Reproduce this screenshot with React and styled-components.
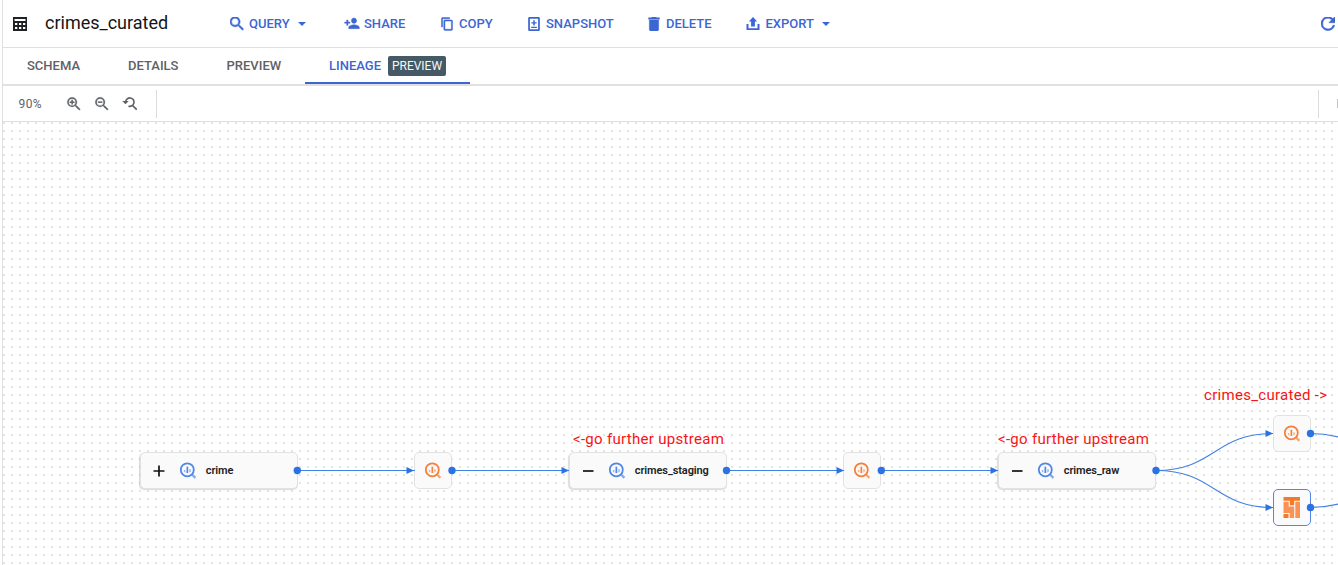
import React from 'react';
import styled, { createGlobalStyle, css } from 'styled-components';

const BLUE = '#3c66d2';
const LINE = '#e0e0e0';

const GlobalStyle = createGlobalStyle`
  * { box-sizing: border-box; }
  body { margin: 0; background: #fff; overflow: hidden; font-family: Roboto, sans-serif; }
`;

const Page = styled.main`
  height: 565px;
  width: 1338px;
  padding-left: 2px;
  overflow: hidden;
`;

const Panel = styled.div`
  height: 100%;
  border-left: 1px solid ${LINE};
  display: flex;
  flex-direction: column;
`;

const Header = styled.header`
  flex: none;
  height: 48px;
  border-bottom: 1px solid ${LINE};
  display: flex;
  align-items: center;
  padding-left: 10px;
  overflow: hidden;
`;

const TitleBlock = styled.div`
  display: flex;
  align-items: center;
  width: 217px;
`;

const Title = styled.h1`
  margin: 0 0 0 18px;
  padding-bottom: 1px;
  font-size: 18px;
  line-height: 24px;
  font-weight: 400;
  color: #151515;
`;

const Icon = styled.svg`
  flex: none;
  display: block;
  width: ${(p) => p.$size}px;
  height: ${(p) => p.$size}px;
  fill: currentColor;
`;

const Action = styled.button`
  flex: none;
  width: ${(p) => p.$width}px;
  height: 32px;
  padding: 0;
  border: 0;
  background: none;
  display: flex;
  align-items: center;
  color: ${BLUE};
  font: 500 13px/20px Roboto, sans-serif;
  white-space: nowrap;
`;

const ActionLabel = styled.span`
  margin-left: ${(p) => p.$gap}px;
`;

const Caret = styled.span`
  margin-left: 8px;
  border: 4px solid transparent;
  border-top-color: ${BLUE};
  border-bottom: 0;
`;

const RefreshButton = styled(Action)`
  margin-left: auto;
`;

const Tabs = styled.nav`
  flex: none;
  height: 38px;
  border-bottom: 2px solid ${LINE};
  display: flex;
`;

const Tab = styled.a`
  height: 36px;
  width: ${(p) => p.$width}px;
  padding-left: 24px;
  display: flex;
  align-items: center;
  font-size: 13px;
  font-weight: 500;
  color: #5f6164;
  border-bottom: 2px solid transparent;
  ${(p) => p.$active && css`
    color: ${BLUE};
    border-bottom-color: ${BLUE};
  `}
`;

const Badge = styled.span`
  margin: 2px 0 0 7px;
  width: 58px;
  height: 20px;
  border-radius: 2px;
  background: #455a64;
  color: #f5f7f8;
  font-size: 12px;
  font-weight: 400;
  line-height: 20px;
  text-align: center;
`;

const Toolbar = styled.div`
  flex: none;
  height: 36px;
  border-bottom: 1px solid ${LINE};
  display: flex;
  align-items: center;
  color: #5f6368;
`;

const Zoom = styled.span`
  width: 62px;
  padding-left: 15.5px;
  font-size: 12px;
  letter-spacing: 0.4px;
`;

const Tool = styled.span`
  width: 28px;
`;

const Divider = styled.span`
  width: 1px;
  height: 28px;
  background: #dadce0;
  margin-left: ${(p) => p.$left};
`;

const ToolEdge = styled.span`
  width: 1px;
  height: 9px;
  margin-left: 18px;
  background: #c4c4c4;
`;

const Canvas = styled.section`
  flex: 1;
  position: relative;
  overflow: hidden;
  background: conic-gradient(from 0deg at 2px 2px, #fff 270deg, #e4e4e4 0) 0 0 / 8px 8px;
`;

const Edges = styled.svg`
  position: absolute;
  left: 0;
  top: 0;
  width: 1335px;
  height: 443px;
  fill: none;
  stroke: #4181e4;
  stroke-width: 1.1;
`;

const Node = styled.div`
  position: absolute;
  left: ${(p) => p.$x}px;
  top: ${(p) => p.$y}px;
  width: ${(p) => (p.$wide ? 158 : 38)}px;
  height: 37px;
  border: 1px solid ${(p) => (p.$selected ? '#5586e3' : '#e2e2e2')};
  border-radius: 5px;
  background: #fafafa;
  display: flex;
  align-items: center;
  justify-content: ${(p) => (p.$wide ? 'flex-start' : 'center')};
  ${(p) => p.$wide && css`
    padding-left: 10px;
    box-shadow: -0.5px 1px 1px rgba(0, 0, 0, 0.14);
  `}
`;

const NodeName = styled.span`
  margin-left: 8.8px;
  font-size: 11px;
  font-weight: 600;
  color: #202124;
  letter-spacing: -0.1px;
`;

const Note = styled.span`
  position: absolute;
  left: ${(p) => p.$x}px;
  top: ${(p) => p.$y}px;
  color: #f71414;
  font-size: 15px;
  line-height: 20px;
  white-space: nowrap;
  letter-spacing: 0.3px;
`;

const paths = {
  search: 'M15.5 14h-.79l-.28-.27A6.47 6.47 0 0 0 16 9.5 6.5 6.5 0 1 0 9.5 16c1.61 0 3.09-.59 4.23-1.57l.27.28v.79l5 4.99L20.49 19l-4.99-5zm-6 0A4.5 4.5 0 1 1 9.5 5a4.5 4.5 0 0 1 0 9z',
  share: 'M15 12c2.21 0 4-1.79 4-4s-1.79-4-4-4-4 1.79-4 4 1.79 4 4 4zm-9-2V7H4v3H1v2h3v3h2v-3h3v-2H6zm9 4c-2.67 0-8 1.34-8 4v2h16v-2c0-2.66-5.33-4-8-4z',
  copy: 'M16 1H4c-1.1 0-2 .9-2 2v14h2V3h12V1zm3 4H8c-1.1 0-2 .9-2 2v14c0 1.1.9 2 2 2h11c1.1 0 2-.9 2-2V7c0-1.1-.9-2-2-2zm0 16H8V7h11v14z',
  snapshot: 'M4 0h16a2 2 0 0 1 2 2v20a2 2 0 0 1-2 2H4a2 2 0 0 1-2-2V2a2 2 0 0 1 2-2zM5 3v18h14V3zM10.7 5.5h2.6v3.3h3.2v2.5h-3.2v3.3h-2.6v-3.3H7.5V8.8h3.2zM7 16.5h10v2.2H7z',
  trash: 'M6 19c0 1.1.9 2 2 2h8c1.1 0 2-.9 2-2V7H6v12zM19 4h-3.5l-1-1h-5l-1 1H5v2h14V4z',
  refresh: 'M17.65 6.35A7.96 7.96 0 0 0 12 4a8 8 0 1 0 7.73 10h-2.08A6 6 0 1 1 12 6c1.66 0 3.14.69 4.22 1.78L13 11h7V4l-2.35 2.35z',
};

const Bold = styled(Icon)`
  stroke: currentColor;
  stroke-width: ${(p) => p.$weight};
`;

function Glyph({ name, size, box = '0 0 24 24', weight = 0 }) {
  return <Bold $size={size} $weight={weight} viewBox={box}><path fillRule="evenodd" d={paths[name]} /></Bold>;
}

function TableIcon() {
  return (
    <Icon $size={14} viewBox="0 0 14 14">
      <path fillRule="evenodd" fill="#202124" d="M0 0h14v14H0zM1.5 2v2h11V2zM2 6v2h2.3V6zM6 6v2h2.3V6zM10 6v2h2.3V6zM2 10v2h2.3v-2zM6 10v2h2.3v-2zM10 10v2h2.3v-2z" />
    </Icon>
  );
}

function ExportIcon() {
  return (
    <Icon $size={14} viewBox="0 0 14 14">
      <path d="M7 0l4.2 4.5H8.9V9.5H5.1V4.5H2.8zM.5 7h2v4.3h9V7h2v6H.5z" />
    </Icon>
  );
}

function ZoomIcon({ kind }) {
  return (
    <Icon $size={18} viewBox="0 0 24 24">
      <path d={paths.search} stroke="currentColor" strokeWidth=".3" />
      {kind === 'in' && <path d="M8.5 6.3h2v2.2h2.2v2h-2.2v2.2h-2v-2.2H6.3v-2h2.2z" />}
      {kind === 'out' && <path d="M6.5 8.5h6v2h-6z" />}
    </Icon>
  );
}

function ResetIcon() {
  return (
    <Icon $size={18} viewBox="-1 0 24 24">
      <path d="M5.2 9A5.6 5.6 0 1 1 9 14.8M14.3 13.8L20 19.5" fill="none" stroke="currentColor" strokeWidth="2.2" />
      <path d="M0.5 8h8.8L5 12.3z" />
    </Icon>
  );
}

function QueryMark({ color }) {
  return (
    <Icon $size={18} viewBox="0 0 18 18">
      <circle cx="8.3" cy="7.8" r="6.5" fill="none" stroke={color} strokeWidth="1.8" />
      <path d="M12.8 12.3l3.6 3.6" stroke={color} strokeOpacity=".7" strokeWidth="2.3" />
      <path fill={color} d="M7.5 4.7h1.7v6.3H7.5z" />
      <path fill={color} fillOpacity=".6" d="M4.8 7.9h1.5v2.8L4.8 9.6zM10.3 7.3h1.5v2.2l-1.5 1.2z" />
    </Icon>
  );
}

function ProcessMark() {
  return (
    <Icon $size={22} viewBox="0 1 22 22">
      <path fill="#f47a2a" d="M2.5 .5H19v4.2h-5.8v4.6H8.8V4.7H2.5zM2.500 18h5v4h-5z" />
      <path fill="#f99256" d="M2.500 5.700h5.200v4.800h5.500V22H8.700v-5H2.500zM14.300 5.700H19V22h-4.700z" />
    </Icon>
  );
}

function Toggle({ open }) {
  return (
    <Icon $size={16} viewBox="0 0 16 16">
      <path d={open ? 'M3 8h10.5' : 'M2.5 8h11M8 2.5v11'} fill="none" stroke="#111" strokeWidth="1.7" />
    </Icon>
  );
}

const ToggleSlot = styled.span`
  width: 28px;
`;

function TableNode({ x, y, name, open }) {
  return (
    <Node $x={x} $y={y} $wide>
      <ToggleSlot><Toggle open={open} /></ToggleSlot>
      <QueryMark color="#4f87e8" />
      <NodeName>{name}</NodeName>
    </Node>
  );
}

const connectors = [
  ['M294 348.5H412', 411, 348.5],
  ['M449 348.5H566', 566, 348.5],
  ['M723 348.5H841', 841, 348.5],
  ['M878 348.5H995', 995, 348.5],
  ['M1153 348.5C1211.5 348.5 1211.5 311.5 1270 311.5', 1270, 311.5],
  ['M1153 348.5C1211.5 348.5 1211.5 385.5 1270 385.5', 1270, 385.5],
  ['M1307 311.5C1325 311.5 1333 314.5 1341 316.5'],
  ['M1307 385.5C1325 385.5 1333 382.5 1341 380.5'],
];

const ports = [[294.3, 348.5], [449, 348.5], [723.5, 348.5], [878.3, 348.5], [1153, 348.5], [1307.5, 311.5], [1307.5, 385.5]];

export default function App() {
  return (
    <Page>
      <GlobalStyle />
      <Panel>
        <Header>
          <TitleBlock>
            <TableIcon />
            <Title>crimes_curated</Title>
          </TitleBlock>
          <Action $width={114}><Glyph name="search" size={14} box="3 3.5 18 18" weight={0.7} /><ActionLabel $gap={5}>QUERY</ActionLabel><Caret /></Action>
          <Action $width={96}><Glyph name="share" size={16} box="1 1 22 24" weight={0.6} /><ActionLabel $gap={4}>SHARE</ActionLabel></Action>
          <Action $width={87}><Glyph name="copy" size={14} box="0 0 23 24" weight={0.8} /><ActionLabel $gap={5}>COPY</ActionLabel></Action>
          <Action $width={120}><Glyph name="snapshot" size={14} /><ActionLabel $gap={5}>SNAPSHOT</ActionLabel></Action>
          <Action $width={99}><Glyph name="trash" size={14} box="3 3 18 18" weight={0.6} /><ActionLabel $gap={5}>DELETE</ActionLabel></Action>
          <Action $width={100}><ExportIcon /><ActionLabel $gap={5.5}>EXPORT</ActionLabel><Caret /></Action>
          <RefreshButton $width={17}><Glyph name="refresh" size={14} box="4 4.5 16 16" weight={0.6} /></RefreshButton>
        </Header>
        <Tabs>
          <Tab $width={101}>SCHEMA</Tab>
          <Tab $width={98.5}>DETAILS</Tab>
          <Tab $width={102.5}>PREVIEW</Tab>
          <Tab $width={165} $active>LINEAGE<Badge>PREVIEW</Badge></Tab>
        </Tabs>
        <Toolbar>
          <Zoom>90%</Zoom>
          <Tool><ZoomIcon kind="in" /></Tool>
          <Tool><ZoomIcon kind="out" /></Tool>
          <Tool><ResetIcon /></Tool>
          <Divider $left="7px" />
          <Divider $left="auto" />
          <ToolEdge />
        </Toolbar>
        <Canvas>
          <TableNode x={137} y={330} name="crime" />
          <Node $x={411} $y={330}><QueryMark color="#f5803b" /></Node>
          <TableNode x={566} y={330} name="crimes_staging" open />
          <Node $x={840} $y={330}><QueryMark color="#f5803b" /></Node>
          <TableNode x={995} y={330} name="crimes_raw" open />
          <Node $x={1270} $y={293}><QueryMark color="#f5803b" /></Node>
          <Node $x={1270} $y={367} $selected><ProcessMark /></Node>
          <Edges viewBox="0 0 1335 443">
            {connectors.map(([d]) => <path key={d} d={d} />)}
            {connectors.filter((c) => c[1]).map(([d, x, y]) => (
              <path key={d} d={`M${x} ${y}l-7.5-3.5v7z`} fill="#2b72e2" stroke="none" />
            ))}
            {ports.map(([x, y]) => <circle key={`${x}-${y}`} cx={x} cy={y} r="3.7" fill="#2b72e2" stroke="none" />)}
          </Edges>
          <Note $x={570} $y={307}>&lt;-go further upstream</Note>
          <Note $x={995} $y={307}>&lt;-go further upstream</Note>
          <Note $x={1201} $y={263}>crimes_curated -&gt;</Note>
        </Canvas>
      </Panel>
    </Page>
  );
}
